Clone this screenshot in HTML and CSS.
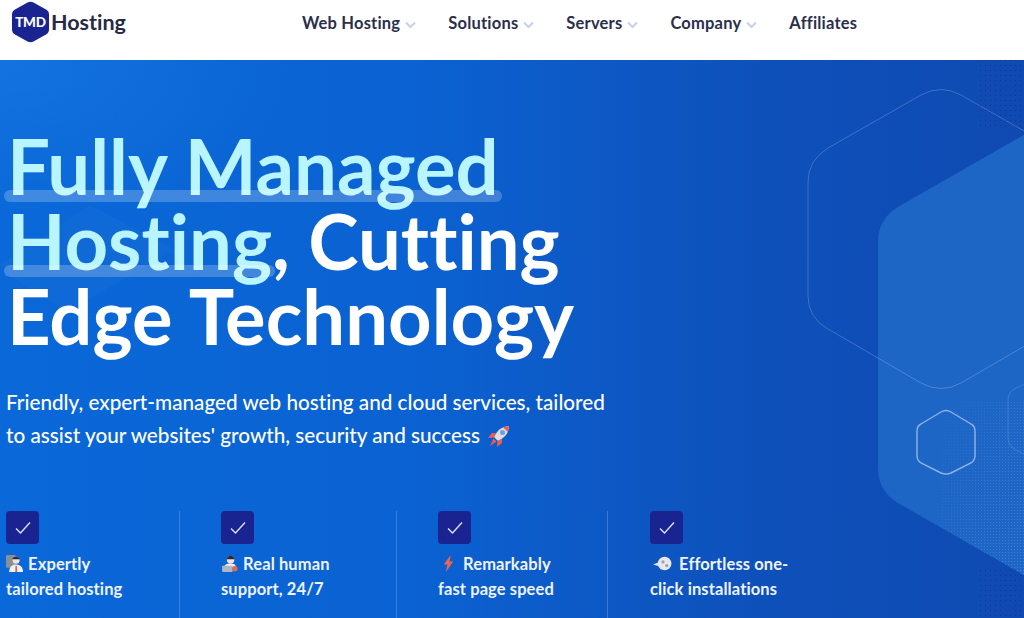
FILE: index.html
```html
<!DOCTYPE html>
<html lang="en">
<head>
<meta charset="utf-8">
<title>TMDHosting</title>
<link rel="stylesheet" href="styles.css">
</head>
<body>
<header class="header">
  <a class="logo">
    <span class="logo-mark">
      <svg class="logo-hex" viewBox="0 0 37 42"><path d="M15.5 1.6 Q18.5 0 21.5 1.6 L34 8.6 Q37 10.3 37 13.5 V28.5 Q37 31.7 34 33.4 L21.5 40.4 Q18.5 42 15.5 40.4 L3 33.4 Q0 31.7 0 28.5 V13.5 Q0 10.3 3 8.6 Z"/></svg>
      <span class="logo-tmd">TMD</span>
    </span>
    <span class="logo-word">Hosting</span>
  </a>
  <nav class="nav">
    <a class="nav-item">Web Hosting <svg class="chev" viewBox="0 0 11 8"><path d="M1 1.5 5.5 6 10 1.5"/></svg></a>
    <a class="nav-item">Solutions <svg class="chev" viewBox="0 0 11 8"><path d="M1 1.5 5.5 6 10 1.5"/></svg></a>
    <a class="nav-item">Servers <svg class="chev" viewBox="0 0 11 8"><path d="M1 1.5 5.5 6 10 1.5"/></svg></a>
    <a class="nav-item">Company <svg class="chev" viewBox="0 0 11 8"><path d="M1 1.5 5.5 6 10 1.5"/></svg></a>
    <a class="nav-item">Affiliates</a>
  </nav>
</header>
<main class="hero">
  <svg class="hero-art" viewBox="0 0 1024 558" aria-hidden="true">
    <defs>
      <pattern id="dots" width="3" height="3" patternUnits="userSpaceOnUse"><rect width="1" height="1" fill="#4a86dc"/></pattern>
      <pattern id="darkdots" width="5" height="5" patternUnits="userSpaceOnUse"><rect width="1" height="1" fill="#1a2f9a"/></pattern>
      <linearGradient id="dotfade" x1="1" y1="1" x2="0" y2="0"><stop offset="0" stop-color="#fff"/><stop offset=".55" stop-color="#fff" stop-opacity=".5"/><stop offset="1" stop-color="#fff" stop-opacity="0"/></linearGradient>
      <mask id="dotmask"><rect x="940" y="340" width="84" height="218" fill="url(#dotfade)"/></mask>
    </defs>
    <path class="hex-left" d="M0 205 L90 145 L175 190 L70 250 Q30 235 0 205 Z"/>
    <rect x="980" y="0" width="44" height="70" fill="url(#darkdots)"/>
    <rect x="980" y="510" width="44" height="48" fill="url(#darkdots)"/>
    <path class="hex-fill" d="M1090 37 L898 147 Q878 159 878 182 V408 Q878 431 898 443 L1090 553 Z"/>
    <path fill="url(#dots)" mask="url(#dotmask)" d="M1090 37 L898 147 Q878 159 878 182 V408 Q878 431 898 443 L1090 553 Z"/>
    <path class="hex-big" d="M921 35 Q941 24 961 35 L1054 88 Q1074 100 1074 122 V236 Q1074 258 1054 269 L961 323 Q941 334 921 323 L828 269 Q808 258 808 236 V122 Q808 100 828 88 Z"/>
    <path class="hex-small" d="M941 352 Q946 349 951 352 L971 364 Q975 366 975 371 V396 Q975 400 971 403 L951 413 Q946 415 941 413 L921 403 Q917 400 917 396 V371 Q917 366 921 364 Z"/>
    <path class="hex-side" d="M1050 313 L1016 328 Q1008 332 1008 340 V378 Q1008 386 1016 390 L1050 408"/>
  </svg>
  <h1 class="title"><span class="mark">Fully Managed</span><br><span class="mark">Hosting</span>, Cutting<br>Edge Technology</h1>
  <p class="lead">Friendly, expert-managed web hosting and cloud services, tailored<br>to assist your websites' growth, security and success
    <svg class="rocket" viewBox="0 0 24 24"><path fill="#dfdde3" d="M22 2c-6 .5-10 3-13 7.500l-2 3.500 4 4 3.500-2C19 12 21.500 8 22 2z"/><circle cx="15.500" cy="8.500" r="2.500" fill="#6d9fd8"/><path fill="#ef5c50" d="M22 2c-2 .2-4 .7-5.800 1.500L20.500 7.800C21.300 6 21.800 4 22 2zM9 9H5l-4 5 6-.5zM15 15v4l-5 4 .5-6zM6.500 14.500l3 3L3 22z"/></svg></p>
  <ul class="features">
    <li class="feature f1">
      <span class="check"><svg viewBox="0 0 16 14"><path d="M1 7.500 5.500 12 15 1.500"/></svg></span>
      <span class="feat-text"><svg class="emoji" viewBox="0 0 16 16"><rect x="0" y="0" width="9" height="12" rx="1" fill="#8a8f96"/><circle cx="9.500" cy="5" r="3.300" fill="#f1e3da"/><path d="M6 4c.5-3 6-3 7 0z" fill="#2b2b30"/><path d="M3 16c0-5 3-7 6.500-7S16 11 16 16z" fill="#eef0f4"/><path d="M9 10h1.200l.3 6H8.700z" fill="#e2574c"/></svg> Expertly<br>tailored hosting</span>
    </li>
    <li class="feature f2">
      <span class="check"><svg viewBox="0 0 16 14"><path d="M1 7.500 5.500 12 15 1.500"/></svg></span>
      <span class="feat-text"><svg class="emoji" viewBox="0 0 16 16"><circle cx="9" cy="4.500" r="3.500" fill="#f1e3da"/><path d="M5.300 4c.5-4.500 7-4.500 7.500 0z" fill="#2b2b30"/><path d="M3 12c0-3 2.500-4 6-4s5 1 5 4z" fill="#eef0f4"/><rect x="1" y="10" width="10" height="6" rx="1" fill="#aeb6c2"/><circle cx="13" cy="13" r="2.600" fill="#e8674f"/></svg> Real human<br>support, 24/7</span>
    </li>
    <li class="feature f3">
      <span class="check"><svg viewBox="0 0 16 14"><path d="M1 7.500 5.500 12 15 1.500"/></svg></span>
      <span class="feat-text"><svg class="emoji" viewBox="0 0 16 16"><path d="M10 0 3.500 9H7L5.500 16 12.500 6H9z" fill="#f0654f"/></svg> Remarkably<br>fast page speed</span>
    </li>
    <li class="feature f4">
      <span class="check"><svg viewBox="0 0 16 14"><path d="M1 7.500 5.500 12 15 1.500"/></svg></span>
      <span class="feat-text"><svg class="emoji emoji-wide" viewBox="0 0 18 16"><path d="M0 9l7-3v5z" fill="#d8dde6"/><circle cx="11" cy="8" r="6.500" fill="#e6e8ee"/><circle cx="9.500" cy="6.500" r="1.500" fill="#9aa3b2"/><circle cx="13" cy="10" r="1.500" fill="#9aa3b2"/></svg> Effortless one-<br>click installations</span>
    </li>
  </ul>
</main>
</body>
</html>
```
FILE: styles.css
```css
* { box-sizing: border-box; }
html, body { margin: 0; height: 100%; }
body {
  width: 1024px;
  height: 618px;
  overflow: hidden;
  font-family: "Lato", "Liberation Sans", sans-serif;
  font-variant-ligatures: none;
  background: #fff;
}

.header {
  height: 60px;
  display: flex;
  align-items: flex-start;
  background: #fff;
  padding-left: 12px;
}
.logo {
  display: flex;
  align-items: center;
  width: 290px;
  height: 44px;
  gap: 2px;
}
.logo-mark {
  position: relative;
  width: 37px;
  height: 42px;
  display: block;
}
.logo-hex { width: 37px; height: 42px; fill: #1a2490; display: block; }
.logo-tmd {
  position: absolute;
  inset: 0;
  display: flex;
  align-items: center;
  justify-content: center;
  color: #fff;
  font-size: 13.500px;
  font-weight: 900;
  letter-spacing: -.2px;
}
.logo-word {
  font-size: 21.500px;
  font-weight: 700;
  color: #262a45;
}
.nav {
  display: flex;
  gap: 32px;
  height: 46px;
  align-items: center;
}
.nav-item {
  display: flex;
  align-items: center;
  gap: 5px;
  font-size: 16.500px;
  font-weight: 700;
  letter-spacing: .2px;
  color: #2b2f4c;
}
.chev {
  width: 11px;
  height: 8px;
  fill: none;
  stroke: #c9d2ea;
  stroke-width: 2.200;
  margin-top: 3px;
}

.hero {
  position: relative;
  height: 558px;
  overflow: hidden;
  padding: 68px 0 0 7px;
  color: #fff;
  background:
    radial-gradient(ellipse 300px 160px at 0 0, rgba(40,140,240,.3), rgba(40,140,240,0) 100%),
    linear-gradient(90deg, #0a68d8 0%, #0b62d2 40%, #0e50ba 75%, #0f4ab2 100%);
}
.hero-art {
  position: absolute;
  left: 0;
  top: 0;
  width: 1024px;
  height: 558px;
  pointer-events: none;
}
.hex-left { fill: rgba(255,255,255,.025); }
.hex-fill { fill: #1e66c6; }
.hex-big { fill: none; stroke: rgba(255,255,255,.2); stroke-width: 1; }
.hex-small { fill: none; stroke: rgba(255,255,255,.5); stroke-width: 1.400; }
.hex-side { fill: none; stroke: rgba(255,255,255,.14); stroke-width: 1; }

.title {
  position: relative;
  margin: 0;
  font-size: 76px;
  line-height: 75px;
  font-weight: 700;
}
.mark {
  position: relative;
  color: #b9f5ff;
}
.mark::after {
  content: "";
  position: absolute;
  left: -3px;
  right: -3px;
  bottom: 9px;
  height: 12px;
  border-radius: 6px;
  background: rgba(255,255,255,.22);
}
.lead {
  position: relative;
  margin: 33px 0 0 -1px;
  font-size: 20.700px;
  line-height: 33px;
  font-weight: 500;
  color: #fff;
}
.rocket {
  width: 24px;
  height: 24px;
  vertical-align: -5px;
  margin-left: 2px;
}
.features {
  list-style: none;
  margin: 0;
  padding: 0;
  display: flex;
  position: absolute;
  left: 6px;
  top: 451px;
}
.feature {
  display: flex;
  flex-direction: column;
  height: 107px;
  border-right: 1px solid rgba(255,255,255,.2);
}
.f1 { width: 174px; }
.f2 { width: 217px; padding-left: 41px; }
.f3 { width: 211px; padding-left: 41px; }
.f4 { padding-left: 42px; border-right: 0; }
.check {
  width: 33px;
  height: 33px;
  border-radius: 4px;
  background: #1a2490;
  display: flex;
  align-items: center;
  justify-content: center;
}
.check svg {
  width: 16px;
  height: 14px;
  fill: none;
  stroke: #dfe6fb;
  stroke-width: 1.300;
}
.feat-text {
  margin-top: 8px;
  font-size: 16.500px;
  letter-spacing: .1px;
  line-height: 25px;
  font-weight: 700;
  color: #eef4ff;
  white-space: nowrap;
}
.emoji {
  width: 17px;
  height: 17px;
  vertical-align: -2px;
  margin-right: 1px;
}
.emoji-wide { width: 19px; margin-left: 3px; margin-right: 3px; }
.f3 .emoji { margin-left: 2px; margin-right: 2px; }
```
